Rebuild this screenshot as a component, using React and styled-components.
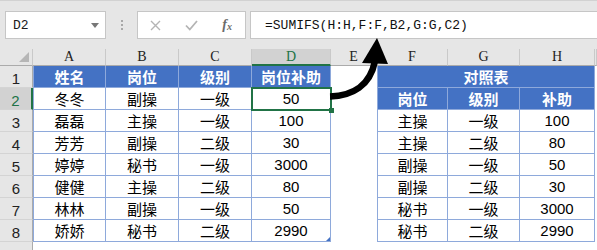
import React from 'react'
import styled, { createGlobalStyle, css } from 'styled-components'

const GlobalStyle = createGlobalStyle`
  html, body {
    margin: 0;
    padding: 0;
    background: #ffffff;
    overflow: hidden;
  }
  body {
    font-family: "Liberation Sans", "Noto Sans CJK SC", sans-serif;
  }
`;

const COLS = ['A', 'B', 'C', 'D', 'E', 'F', 'G', 'H', 'I'];

const staff = [
  ['姓名', '岗位', '级别', '岗位补助'],
  ['冬冬', '副操', '一级', '50'],
  ['磊磊', '主操', '一级', '100'],
  ['芳芳', '副操', '二级', '30'],
  ['婷婷', '秘书', '一级', '3000'],
  ['健健', '主操', '二级', '80'],
  ['林林', '副操', '一级', '50'],
  ['娇娇', '秘书', '二级', '2990'],
];

const lookup = [
  ['岗位', '级别', '补助'],
  ['主操', '一级', '100'],
  ['主操', '二级', '80'],
  ['副操', '一级', '50'],
  ['副操', '二级', '30'],
  ['秘书', '一级', '3000'],
  ['秘书', '二级', '2990'],
];

const App = () => {
  const rows = [1, 2, 3, 4, 5, 6, 7, 8, 9];

  return (
    <>
      <GlobalStyle />
      <Page>
        <FormulaBar>
          <NameBox>
            D2
            <DropArrow />
          </NameBox>
          <Splitter>
            <i /><i /><i />
          </Splitter>
          <ButtonsBox>
            <BarButton>
              <svg width="11" height="11" viewBox="0 0 11 11">
                <path d="M1 1 L10 10 M10 1 L1 10" stroke="#b4b4b4" strokeWidth="1.4" fill="none" />
              </svg>
            </BarButton>
            <BarButton>
              <svg width="13" height="11" viewBox="0 0 13 11">
                <path d="M1 5.5 L4.8 9.5 L12 1" stroke="#b4b4b4" strokeWidth="1.8" fill="none" />
              </svg>
            </BarButton>
            <BarButton>
              <Fx>f<sub>x</sub></Fx>
            </BarButton>
          </ButtonsBox>
          <FormulaBox>=SUMIFS(H:H,F:F,B2,G:G,C2)</FormulaBox>
        </FormulaBar>

        <Sheet>
          <Corner />
          {COLS.map((c) => (
            <ColHead key={c} $sel={c === 'D'}>{c === 'I' ? '' : c}</ColHead>
          ))}

          {rows.map((r) => (
            <React.Fragment key={r}>
              <RowHead $sel={r === 2}>{r}</RowHead>

              {[0, 1, 2, 3].map((ci) =>
                r <= 8 ? (
                  <Cell
                    key={'l' + ci}
                    $table
                    $first={ci === 0}
                    $head={r === 1}
                    $active={r === 2 && ci === 3}
                    $corner={r === 8 && ci === 3}
                  >
                    {staff[r - 1][ci]}
                  </Cell>
                ) : (
                  <Cell key={'l' + ci} />
                )
              )}

              <Cell />

              {r === 1 ? (
                <Cell $table $first $head $span={3}>对照表</Cell>
              ) : r <= 8 ? (
                [0, 1, 2].map((ci) => (
                  <Cell key={'r' + ci} $table $first={ci === 0} $head={r === 2}>
                    {lookup[r - 2][ci]}
                  </Cell>
                ))
              ) : (
                [0, 1, 2].map((ci) => <Cell key={'r' + ci} />)
              )}

              <Cell />
            </React.Fragment>
          ))}
        </Sheet>

        <Arrow width="597" height="250" viewBox="0 0 597 250">
          <path d="M330 96.5 C352 96 370 86 375 61" stroke="#000" strokeWidth="6.5" fill="none" />
          <polygon points="377,38 362,63 388,64" fill="#000" />
        </Arrow>
      </Page>
    </>
  );
};

export default App

const Page = styled.div`
  position: relative;
  width: 597px;
  height: 250px;
  overflow: hidden;
  background: #ffffff;
`;

const FormulaBar = styled.div`
  box-sizing: border-box;
  height: 49px;
  display: flex;
  align-items: flex-start;
  padding: 10px 0 0 5px;
  background: #e6e6e6;
  border-top: 1px solid #d2d2d2;
`;

const boxBase = css`
  box-sizing: border-box;
  height: 28px;
  background: #ffffff;
  border: 1px solid #c6c6c6;
`;

const NameBox = styled.div`
  ${boxBase};
  position: relative;
  width: 101px;
  display: flex;
  align-items: center;
  padding-left: 7px;
  font-family: "Liberation Mono", monospace;
  font-size: 13px;
  color: #1a1a1a;
`;

const DropArrow = styled.span`
  position: absolute;
  right: 6px;
  top: 11px;
  width: 0;
  height: 0;
  border-left: 4px solid transparent;
  border-right: 4px solid transparent;
  border-top: 5px solid #777777;
`;

const Splitter = styled.div`
  width: 31px;
  height: 28px;
  display: flex;
  flex-direction: column;
  align-items: center;
  justify-content: center;
  gap: 2px;
  i {
    display: block;
    width: 2px;
    height: 2px;
    background: #a8a8a8;
  }
`;

const ButtonsBox = styled.div`
  ${boxBase};
  width: 109px;
  display: flex;
  align-items: center;
`;

const BarButton = styled.span`
  width: 36px;
  display: flex;
  align-items: center;
  justify-content: center;
`;

const Fx = styled.span`
  font-family: "Liberation Serif", serif;
  font-style: italic;
  font-weight: 700;
  font-size: 14px;
  color: #6b6b6b;
  sub {
    font-size: 10px;
    vertical-align: -1px;
  }
`;

const FormulaBox = styled.div`
  ${boxBase};
  flex: 1;
  margin-left: 4px;
  border-right: none;
  display: flex;
  align-items: center;
  padding-left: 14px;
  font-family: "Liberation Mono", monospace;
  font-size: 13px;
  color: #111111;
`;

const Sheet = styled.div`
  display: grid;
  grid-template-columns: 33px 73px 73px 73px 79px 46px 71px 72px 75px 1fr;
  grid-template-rows: 17px repeat(9, 22px);
`;

const Corner = styled.div`
  box-sizing: border-box;
  position: relative;
  background: #e6e6e6;
  border-right: 1px solid #c9c9c9;
  border-bottom: 1px solid #ababab;
  &::after {
    content: '';
    position: absolute;
    right: 3px;
    bottom: 3px;
    width: 10px;
    height: 10px;
    background: #b6b6b6;
    clip-path: polygon(100% 0, 100% 100%, 0 100%);
  }
`;

const ColHead = styled.div`
  box-sizing: border-box;
  display: flex;
  align-items: center;
  justify-content: center;
  background: #e6e6e6;
  border-right: 1px solid #c9c9c9;
  border-bottom: 1px solid #ababab;
  font-family: "Liberation Serif", serif;
  font-size: 14px;
  color: #222222;
  ${(p) => p.$sel && css`
    background: #d2d2d2;
    color: #217346;
    border-bottom: 2px solid #217346;
    padding-top: 1px;
  `}
`;

const RowHead = styled.div`
  box-sizing: border-box;
  display: flex;
  align-items: center;
  justify-content: center;
  padding-top: 3px;
  background: #e6e6e6;
  border-right: 1px solid #ababab;
  border-bottom: 1px solid #d4d4d4;
  font-family: "Liberation Sans", sans-serif;
  font-size: 15px;
  color: #222222;
  ${(p) => p.$sel && css`
    background: #d2d2d2;
    color: #217346;
    border-right: 2px solid #217346;
  `}
`;

const Cell = styled.div`
  box-sizing: border-box;
  display: flex;
  align-items: center;
  justify-content: center;
  font-family: "Liberation Sans", "Noto Sans CJK SC", sans-serif;
  font-size: 15px;
  color: #000000;
  white-space: nowrap;
  ${(p) => p.$table && css`
    border-right: 1px solid #8ea9db;
    border-bottom: 1px solid #8ea9db;
  `}
  ${(p) => p.$first && css`
    border-left: 1px solid #8ea9db;
  `}
  ${(p) => p.$head && css`
    background: #4472c4;
    color: #ffffff;
    font-weight: 700;
  `}
  ${(p) => p.$span && css`
    grid-column: span ${p.$span};
  `}
  ${(p) => p.$active && css`
    position: relative;
    z-index: 2;
    &::after {
      content: '';
      position: absolute;
      left: -1px;
      top: -1px;
      right: -2px;
      bottom: -2px;
      border: 2px solid #217346;
    }
    &::before {
      content: '';
      position: absolute;
      right: -4px;
      bottom: -4px;
      width: 5px;
      height: 5px;
      background: #217346;
      z-index: 1;
    }
  `}
  ${(p) => p.$corner && css`
    position: relative;
    &::after {
      content: '';
      position: absolute;
      right: 0;
      bottom: 0;
      width: 4px;
      height: 4px;
      background: #4472c4;
      clip-path: polygon(100% 0, 100% 100%, 0 100%);
    }
  `}
`;

const Arrow = styled.svg`
  position: absolute;
  left: 0;
  top: 0;
  pointer-events: none;
  z-index: 5;
`;
